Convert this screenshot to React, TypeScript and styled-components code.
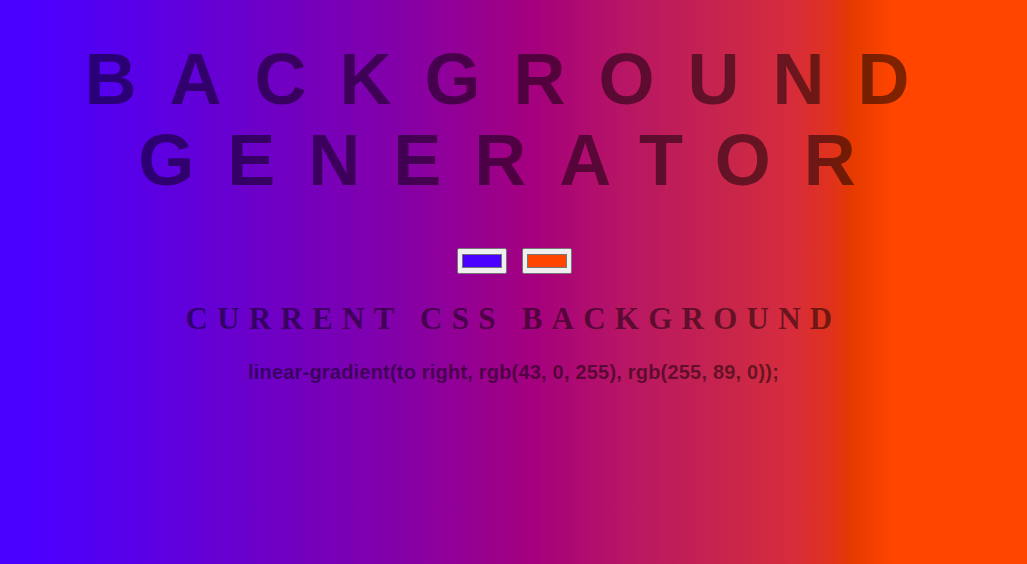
import React from "react";
import styled, { createGlobalStyle } from "styled-components";

const GlobalStyle = createGlobalStyle`
  html, body {
    margin: 0;
    padding: 0;
    height: 100%;
  }
  #root {
    min-height: 100%;
  }
`;

const Page = styled.div`
  min-height: 100vh;
  box-sizing: border-box;
  padding: 39px 8px 0;
  background: linear-gradient(
    to right,
    #4a00ff 0%,
    #4a00ff 3%,
    #5a00e6 14%,
    #6c00c8 25%,
    #8400a8 39%,
    #a5007e 52%,
    #b81664 61%,
    #c6244e 70%,
    #d62c3c 77%,
    #e0321c 81%,
    #e63a00 83%,
    #ff4500 87%,
    #ff4500 100%
  );
  color: rgba(0, 0, 0, 0.5);
  text-align: center;
`;

const Title = styled.h1`
  margin: 0;
  font-family: "Liberation Sans", Arial, sans-serif;
  font-weight: 700;
  font-size: 72px;
  line-height: 81px;
  letter-spacing: 33px;
  text-transform: uppercase;
  color: rgba(0, 0, 0, 0.5);
`;

const Pickers = styled.div`
  display: flex;
  justify-content: center;
  gap: 15px;
  margin-top: 47px;
  padding-left: 2px;
`;

const ColorInput = styled.input`
  -webkit-appearance: none;
  appearance: none;
  width: 50px;
  height: 26px;
  box-sizing: border-box;
  margin: 0;
  padding: 1px 2px;
  border: 1px solid #767676;
  border-radius: 2px;
  background: #efefef;
  cursor: pointer;

  &::-webkit-color-swatch-wrapper {
    padding: 4px 2px;
  }
  &::-webkit-color-swatch {
    border: 1px solid #777777;
    border-radius: 0;
  }
`;

const Subtitle = styled.h2`
  margin: 27px 0 0;
  font-family: "Liberation Serif", "Times New Roman", serif;
  font-weight: 700;
  font-size: 31px;
  line-height: 36px;
  letter-spacing: 9.25px;
  text-transform: uppercase;
  color: rgba(0, 0, 0, 0.5);
`;

const CssText = styled.h3`
  margin: 23px 0 0;
  font-family: "Liberation Sans", Arial, sans-serif;
  font-weight: 700;
  font-size: 20px;
  line-height: 24px;
  letter-spacing: 0.2px;
  color: rgba(0, 0, 0, 0.5);
`;

export default function App() {
  return (
    <>
      <GlobalStyle />
      <Page>
        <Title>Background Generator</Title>
        <Pickers>
          <ColorInput type="color" defaultValue="#4a00ff" />
          <ColorInput type="color" defaultValue="#ff4500" />
        </Pickers>
        <Subtitle>Current CSS Background</Subtitle>
        <CssText>linear-gradient(to right, rgb(43, 0, 255), rgb(255, 89, 0));</CssText>
      </Page>
    </>
  );
}
